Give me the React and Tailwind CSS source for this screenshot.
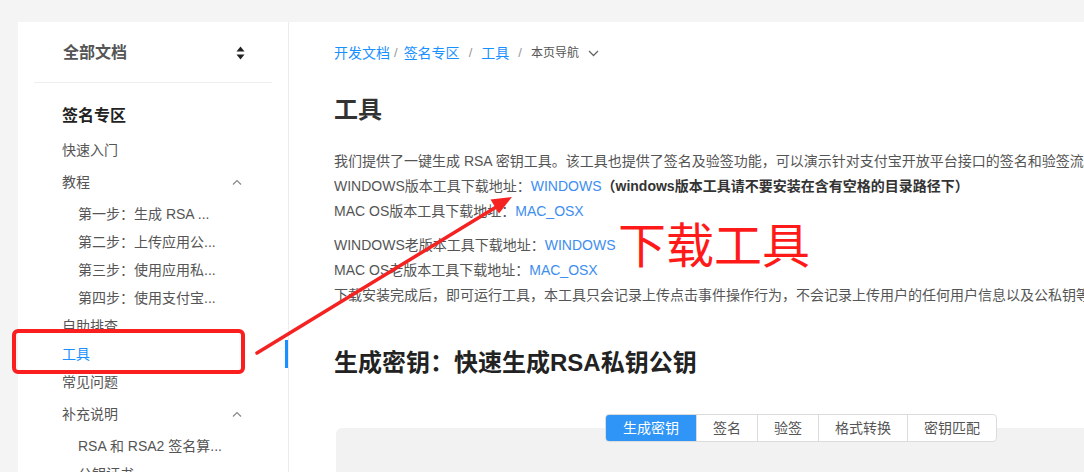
import React from 'react';

const FONT = { fontFamily: '"Liberation Sans", "Noto Sans CJK SC", sans-serif' };

const ChevronUp = () => (
  <svg width="10" height="6" viewBox="0 0 10 6" fill="none" className="mr-[2px]">
    <polyline points="1,5.5 5,1.5 9,5.5" stroke="#888" strokeWidth="1.2" />
  </svg>
);

const SortIcon = () => (
  <svg width="9" height="14" viewBox="0 0 9 14">
    <polygon points="4.5,0.5 8.5,5.5 0.5,5.5" fill="#222" />
    <polygon points="0.5,8.5 8.5,8.5 4.5,13.5" fill="#222" />
  </svg>
);

const NavItem = ({ label, active, group, sub }) => (
  <div
    className={
      'flex items-center justify-between pr-[44px] ' +
      (group ? 'h-[36px] ' : 'h-[28px] ') +
      (sub ? 'pl-[60px] ' : 'pl-[44px] ') +
      (active ? 'border-r-[3px] border-[#1890ff] text-[#1890ff]' : 'text-[#555]')
    }
  >
    <span className="text-[14px] whitespace-nowrap">{label}</span>
    {group && <ChevronUp />}
  </div>
);

const Sidebar = () => (
  <aside className="w-[271px] shrink-0 bg-white border-r border-[#ececec]">
    <div className="mx-[16px] h-[61px] pt-[2px] border-b border-[#ededed] flex items-center justify-between pl-[29px] pr-[27px]">
      <span className="text-[16px] font-bold text-[#555]">全部文档</span>
      <SortIcon />
    </div>
    <div className="pt-[18px] pb-[5px] pl-[44px]">
      <div className="text-[16px] leading-[30px] font-bold text-[#222]">签名专区</div>
    </div>
    <NavItem label="快速入门" />
    <NavItem label="教程" group />
    <NavItem label="第一步：生成 RSA ..." sub />
    <NavItem label="第二步：上传应用公..." sub />
    <NavItem label="第三步：使用应用私..." sub />
    <NavItem label="第四步：使用支付宝..." sub />
    <NavItem label="自助排查" />
    <NavItem label="工具" active />
    <NavItem label="常见问题" />
    <NavItem label="补充说明" group />
    <NavItem label="RSA 和 RSA2 签名算..." sub />
    <NavItem label="公钥证书" sub />
  </aside>
);

const Link = ({ children }) => <span className="text-[#3d8ef0]">{children}</span>;

const tabs = ['生成密钥', '签名', '验签', '格式转换', '密钥匹配'];

const Main = () => (
  <main className="flex-1 bg-white pl-[45px] pt-[21px] whitespace-nowrap">
    <div className="flex items-center h-[20px] text-[14px]">
      <span className="text-[#1890ff]">开发文档</span>
      <span className="ml-[4px] mr-[6px] text-[#999] text-[13px]">/</span>
      <span className="text-[#1890ff]">签名专区</span>
      <span className="mx-[9px] text-[#999] text-[13px]">/</span>
      <span className="text-[#1890ff]">工具</span>
      <span className="mx-[9px] text-[#999] text-[13px]">/</span>
      <span className="text-[12px] text-[#555]">本页导航</span>
      <svg width="11" height="7" viewBox="0 0 11 7" fill="none" className="ml-[9px]">
        <polyline points="1,1 5.5,5.5 10,1" stroke="#666" strokeWidth="1.3" />
      </svg>
    </div>

    <h1 className="mt-[31px] text-[24px] leading-[32px] font-bold text-[#333]">工具</h1>

    <div className="mt-[23px] text-[14px] leading-[25px] text-[#555]">
      <p>我们提供了一键生成 RSA 密钥工具。该工具也提供了签名及验签功能，可以演示针对支付宝开放平台接口的签名和验签流程。</p>
      <p>
        WINDOWS版本工具下载地址：<Link>WINDOWS</Link>
        <strong className="text-[#333]">（windows版本工具请不要安装在含有空格的目录路径下）</strong>
      </p>
      <p>MAC OS版本工具下载地址：<Link>MAC_OSX</Link></p>
    </div>
    <div className="mt-[9px] text-[14px] leading-[25px] text-[#555]">
      <p>WINDOWS老版本工具下载地址：<Link>WINDOWS</Link></p>
      <p>MAC OS老版本工具下载地址：<Link>MAC_OSX</Link></p>
      <p>下载安装完成后，即可运行工具，本工具只会记录上传点击事件操作行为，不会记录上传用户的任何用户信息以及公私钥等信息。</p>
    </div>

    <h2 className="mt-[38px] text-[24px] leading-[34px] font-bold text-[#222]">生成密钥：快速生成RSA私钥公钥</h2>

    <div className="mt-[34px] ml-[2px] w-[930px]">
      <div className="relative z-10 flex justify-center">
        <div className="flex h-[28px] rounded-[4px] border border-[#dcdcdc] bg-white overflow-hidden text-[14px]">
          {tabs.map((t, i) => (
            <div
              key={t}
              className={
                'flex items-center px-[16px] ' +
                (i === 0 ? 'bg-[#2f95f7] text-white pl-[17px] pr-[17px]' : 'text-[#555] border-l border-[#dcdcdc]')
              }
            >
              {t}
            </div>
          ))}
        </div>
      </div>
      <div className="-mt-[14px] h-[120px] rounded-[6px] bg-[#f2f2f2]" />
    </div>
  </main>
);

export default function App() {
  return (
    <div className="relative w-full h-[472px] overflow-hidden bg-[#f4f4f4] pt-[22px] pl-[18px] flex" style={FONT}>
      <Sidebar />
      <Main />

      {/* annotations */}
      <div className="absolute left-[12px] top-[329px] w-[233px] h-[45px] border-[4px] border-[#fa1e1e] rounded-[6px] pointer-events-none" />
      <svg className="absolute left-0 top-0 pointer-events-none" width="1084" height="472">
        <line x1="257" y1="353" x2="497" y2="206.5" stroke="#f52222" strokeWidth="3.5" strokeLinecap="round" />
        <polygon points="512,197 499,213.5 490.5,199.5" fill="#f52222" />
      </svg>
      <div className="absolute left-[618px] top-[219px] text-[48px] leading-[56px] text-[#ff1a1a] pointer-events-none">下载工具</div>
    </div>
  );
}
